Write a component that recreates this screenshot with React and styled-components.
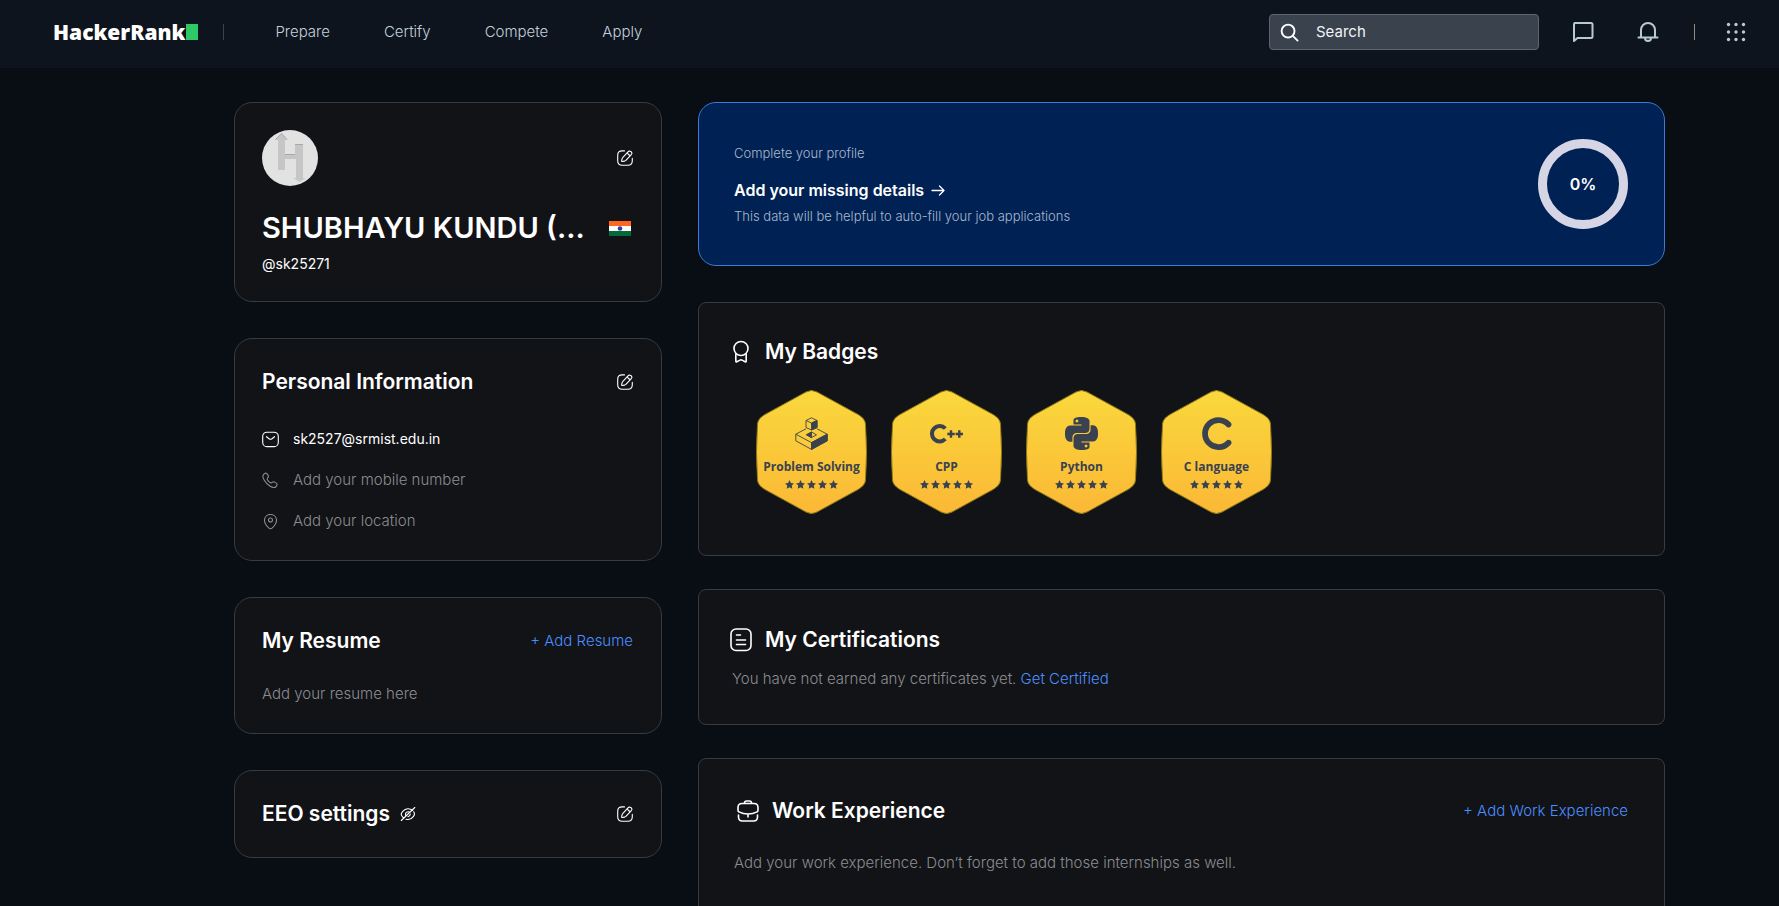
import React from "react";
import styled, { createGlobalStyle } from "styled-components";
import { SiPython } from "react-icons/si";

const GlobalStyle = createGlobalStyle`
  *, *::before, *::after { box-sizing: border-box; }
  body {
    margin: 0;
    background: #080e14;
    color: #ffffff;
    font-family: Inter, "Liberation Sans", sans-serif;
    font-size: 15px;
    line-height: 20px;
  }
  h1, h2, p, ul { margin: 0; padding: 0; }
  ul { list-style: none; }
  a { text-decoration: none; color: inherit; }
  button { border: 0; padding: 0; background: none; color: inherit; font: inherit; cursor: pointer; }
  svg { display: block; flex: none; }
`;

/* ---------- shell ---------- */

const Shell = styled.div`
  display: flex;
  flex-direction: column;
  height: 100vh;
`;

const Header = styled.header`
  display: flex;
  align-items: center;
  flex: none;
  height: 68px;
  padding: 0 33px 4px 53px;
  background: #0e141e;
`;

const Logo = styled.a`
  display: flex;
  align-items: center;
  gap: 1px;
  font-family: "Open Sans", "Noto Sans", sans-serif;
  font-size: 21px;
  font-weight: 800;
  line-height: 24px;
`;

const LogoCursor = styled.span`
  width: 12px;
  height: 16px;
  background: #2ec866;
`;

const Divider = styled.span`
  width: 1px;
  height: 16px;
  background: ${(p) => p.$color};
`;

const LogoGroup = styled.div`
  display: flex;
  align-items: center;
  gap: 25px;
`;

const Nav = styled.nav`
  display: flex;
  gap: 54px;
  margin-left: 51px;
  color: #c3d0da;
  font-weight: 300;
`;

const HeaderTools = styled.div`
  display: flex;
  align-items: center;
  margin-left: auto;
  color: #b7c9d3;
`;

const SearchBox = styled.label`
  display: flex;
  align-items: center;
  gap: 17px;
  width: 270px;
  height: 36px;
  margin-right: 32px;
  padding: 0 10px;
  border: 1px solid #5d666f;
  border-radius: 4px;
  background: #39424d;
  color: #ffffff;
`;

const SearchInput = styled.input`
  flex: 1;
  min-width: 0;
  border: 0;
  padding: 0;
  outline: 0;
  background: none;
  color: #ffffff;
  font: inherit;
  &::placeholder { color: #f1f4f6; opacity: 1; }
`;

const ToolGroup = styled.div`
  display: flex;
  align-items: center;
  gap: ${(p) => p.$gap}px;
`;

/* ---------- page ---------- */

const Main = styled.main`
  display: grid;
  grid-template-columns: minmax(0, 428px) minmax(0, 1fr);
  gap: 36px;
  align-items: start;
  flex: 1;
  min-height: 0;
  padding: 34px 114px 34px 234px;
  overflow-y: auto;
  scrollbar-width: none;
`;

const Column = styled.div`
  display: flex;
  flex-direction: column;
  gap: ${(p) => p.$gap}px;
`;

const Card = styled.section`
  border: 1px solid #383b3f;
  border-radius: 18px;
  padding: 27px 28px 27px 27px;
  background: #121317;
`;

const Row = styled.div`
  display: flex;
  align-items: center;
  justify-content: space-between;
`;

const Title = styled.h2`
  display: flex;
  align-items: center;
  gap: 10px;
  font-size: 21px;
  font-weight: 600;
  line-height: 32px;
`;

const Muted = styled.p`
  color: #8a8c90;
  font-weight: 300;
`;

const LinkText = styled.a`
  color: #4a8eff;
  font-weight: 300;
`;

/* ---------- left column ---------- */

const Avatar = styled.svg`
  width: 56px;
  height: 56px;
  border-radius: 50%;
`;

const Name = styled.h1`
  font-size: 29px;
  font-weight: 600;
  line-height: 40px;
  white-space: nowrap;
`;

const NameRow = styled(Row)`
  margin-top: 22px;
  padding-right: 2px;
`;

const Handle = styled.p`
  margin-top: 6px;
  font-size: 14px;
`;

const ContactList = styled.ul`
  display: flex;
  flex-direction: column;
  gap: 21px;
  margin: 31px 0 2px;
`;

const Contact = styled.li`
  display: flex;
  align-items: center;
  gap: 14px;
  color: ${(p) => (p.$filled ? "#ffffff" : "#8a8c90")};
  font-size: ${(p) => (p.$filled ? 14 : 15)}px;
  font-weight: ${(p) => (p.$filled ? 400 : 300)};
`;

const ResumeNote = styled(Muted)`
  margin: 27px 0 2px;
`;

/* ---------- right column ---------- */

const Banner = styled(Card)`
  display: flex;
  align-items: center;
  justify-content: space-between;
  padding: 36px 36px 36px 35px;
  border-color: #3b7ad9;
  background: #002153;
`;

const BannerText = styled.div`
  display: flex;
  flex-direction: column;
  font-size: 13px;
  font-weight: 300;
  color: #a9bace;
`;

const BannerLink = styled.a`
  display: flex;
  align-items: center;
  gap: 7px;
  margin: 15px 0 4px;
  color: #ffffff;
  font-size: 16px;
  font-weight: 600;
  line-height: 24px;
`;

const Progress = styled.div`
  display: grid;
  place-items: center;
  width: 90px;
  height: 90px;
  border: 9px solid #d5d5e5;
  border-radius: 50%;
  font-size: 16px;
  font-weight: 600;
`;

const Panel = styled(Card)`
  border-radius: 8px;
  padding: ${(p) => p.$padding};
`;

const PanelTitle = styled(Title)`
  gap: 12px;
`;

const BadgeList = styled.ul`
  display: flex;
  gap: 24px;
  margin-top: 22px;
  padding-left: 27px;
`;

const BadgeItem = styled.li`
  position: relative;
  display: flex;
  flex-direction: column;
  align-items: center;
  width: 111px;
  height: 124px;
  padding-top: 27px;
  color: #39424e;
`;

const BadgeShape = styled.svg`
  position: absolute;
  inset: 0;
`;

const BadgeContent = styled.div`
  position: relative;
  display: flex;
  flex-direction: column;
  align-items: center;
`;

const BadgeName = styled.span`
  margin-top: 8px;
  font-family: "Open Sans", "Noto Sans", sans-serif;
  font-size: 12px;
  font-weight: 700;
  line-height: 18px;
  white-space: nowrap;
`;

const Stars = styled.div`
  display: flex;
  gap: 2px;
  margin-top: 4px;
`;

const CertificateNote = styled(Muted)`
  padding-left: 3px;
`;

const WorkHeading = styled(Row)`
  padding-left: 2px;
`;

/* ---------- icons ---------- */

const Icon = ({ size = 16, box = 24, width = 1.5, children }) => (
  <svg width={size} height={size} viewBox={`0 0 ${box} ${box}`} fill="none" stroke="currentColor"
    strokeWidth={width} strokeLinecap="round" strokeLinejoin="round" aria-hidden="true">
    {children}
  </svg>
);

const EditIcon = () => (
  <Icon size={16} box={16} width={1.1}>
    <path d="M7.5 .9H5.2Q.7 .9 .7 5.2v5.5q0 4.5 4.5 4.5h5.6q4.5 0 4.5-4.5V8.4" />
    <path d="M11 1.8q1.2-1.3 2.7-.3 2 1.4.6 3.1L8.900 10.300q-.6.6-1.600.8l-1.900.4q-.9.1-.7-.8l.4-2q.2-.8.8-1.400z" />
    <path d="M10.300 2.700q.7 2.200 3 2.900" />
  </Icon>
);

const SearchIcon = () => (
  <Icon size={19} box={20} width={2}>
    <circle cx="8.500" cy="8.500" r="6.800" /><path d="M13.500 13.500l5 5" />
  </Icon>
);

const ChatIcon = () => (
  <Icon size={24} width={2}>
    <path d="M3.500 3h16.500q1.500 0 1.500 1.500v12q0 1.500-1.500 1.500H6.500L3 21V4.500q0-1.500 1.500-1.500" />
  </Icon>
);

const BellIcon = () => (
  <Icon size={24} width={2}>
    <path d="M5 17V10a7 7 0 0 1 14 0v7M2.500 17.500h19M9 18c0 4 6 4 6 0" />
  </Icon>
);

const GridIcon = () => (
  <svg width="20" height="20" viewBox="0 0 20 20" fill="currentColor" aria-hidden="true">
    {[2.500, 10, 17.500].map((y) => [2.500, 10, 17.500].map((x) => <circle key={`${x}-${y}`} cx={x} cy={y} r="1.700" />))}
  </svg>
);

const MailIcon = () => (
  <Icon size={17} box={17} width={1.1}>
    <rect x=".7" y="1.200" width="15.600" height="14.400" rx="4.200" />
    <path d="M4.500 5.700l2.500 2q1.500 1.100 3 0l2.500-2" />
  </Icon>
);

const PhoneIcon = () => (
  <Icon size={17} box={17} width={1.1}>
    <path d="M1.500 2.600Q4-.2 5.500 2.400q1.700 2.200.2 3.500-1.400 1.200.9 3.500t3.600 1q1.300-1.300 3.400.2 2.700 1.600.6 3.900-2.200 2.200-6-.2Q4.500 12 2.300 8.200 0 4.500 1.500 2.600z" />
  </Icon>
);

const PinIcon = () => (
  <Icon size={17} box={17} width={1.1}>
    <path d="M2.500 6.800C2.900-.3 14.100-.3 14.500 6.800c.2 3.300-2 6-4.200 8.100q-1.800 1.600-3.600 0C4.500 12.800 2.300 10.100 2.500 6.800z" />
    <circle cx="8.500" cy="7" r="2" />
  </Icon>
);

const EyeOffIcon = () => (
  <Icon size={16} box={16} width={1.1}>
    <path d="M12.600 4.500C9.800 1.900 5.500 2.300 3 5.200 1 7.500.6 8.300 2.300 10.500q.7.9 1.500 1.500M6 13.200c3 .9 5.500-.1 7.300-2.500 1.900-2.400 1.600-3.300.4-5M10.300 8.100q-.3 2.200-2.300 2.500M5.700 9.700C4.800 6.800 7 5.100 9.800 6M14.800 1.500L1.300 14.500" />
  </Icon>
);

const ArrowIcon = () => (
  <Icon size={14} box={14} width={1.3}><path d="M1 7.500h12M8.500 3L13 7.500 8.500 12" /></Icon>
);

const AwardIcon = () => (
  <Icon size={24} width={1.6}>
    <circle cx="12" cy="8.500" r="7" />
    <path d="M6.800 14v7q0 1.200 1 .7l3.200-1.600q1-.5 2 0l3.200 1.600q1 .5 1-.7v-7" />
  </Icon>
);

const CertificateIcon = () => (
  <Icon size={24} width={1.6}>
    <rect x="2" y="1" width="20" height="21.500" rx="5" />
    <path d="M7.500 7h4M7.500 12h9M7.500 16.500h9" />
  </Icon>
);

const BriefcaseIcon = () => (
  <Icon size={24} width={1.6}>
    <path d="M8.500 4.500V4q0-2 2-2h3q2 0 2 2v.5M2 8.500q0-4 4-4h12q4 0 4 4v3q0 1-1 1.400-4 2.100-9 2.100t-9-2.100Q2 12.500 2 11.500zM2.500 16v2q0 4 4 4h11q4 0 4-4v-2M12 15v3" />
  </Icon>
);

const IndiaFlag = () => (
  <svg width="22" height="15" viewBox="0 0 22 15" role="img" aria-label="India">
    <path fill="#ff671f" d="M0 0h22v5H0z" />
    <path fill="#fff" d="M0 5h22v5H0z" />
    <path fill="#046a38" d="M0 10h22v5H0z" />
    <circle cx="11" cy="7.500" r="2.300" fill="#3a37a8" />
  </svg>
);

const ProfilePicture = () => (
  <Avatar viewBox="0 0 56 56" role="img" aria-label="Profile picture">
    <rect width="56" height="56" fill="#e2e2e2" />
    <path fill="#c6c6c6" d="M16 40V10h-3l6.500-7 6 7h-2.500v14h10V14h8v34h2.500l-6 4-6.500-4h3V29H23v11z" />
    <path fill="none" stroke="#a9a9a9" d="M13.500 9.500l6-6 5.500 6M23 24.500h10M33 14.500h8" />
  </Avatar>
);

const StarIcon = () => (
  <svg width="9" height="9" viewBox="0 0 24 24" fill="currentColor" aria-hidden="true">
    <path d="M12 .3l3.700 7.500 8.300 1.200-6 5.800 1.500 8.400L12 19.300l-7.500 3.900L6 14.800 0 9l8.300-1.200z" />
  </svg>
);

const ProblemSolvingIcon = () => (
  <svg width="33" height="33" viewBox="0 0 33 33" fill="none" stroke="currentColor" strokeWidth=".9" strokeLinejoin="round">
    <path d="M11 11.800L.8 17.200v6.600l15.700 8.600 15.700-8.600v-6.600L22 11.800M.8 17.200l15.700 8.400 15.700-8.400M16.500 25.600v6.800" />
    <path fill="currentColor" d="M16.500 25.600l15.700-8.400v6.600l-15.700 8.600z" />
    <path d="M16.500.8l5.500 2.700v7L16.500 13 11 10.500v-7zM11 3.500l5.500 2.600L22 3.500" />
    <path fill="currentColor" d="M16.500 6.100L22 3.500v7L16.500 13z" />
    <path d="M16.500 15l5 2.800-5 2.800-5-2.800z" />
    <path fill="currentColor" d="M16.500 15v5.600l-5-2.800z" />
  </svg>
);

const CppIcon = () => (
  <svg width="33" height="33" viewBox="0 0 33 33" fill="none" stroke="currentColor">
    <path strokeWidth="4" d="M15.300 11.500a7.700 7.700 0 1 0 0 10.500" />
    <path strokeWidth="2.400" d="M17.300 17h7.400M21 13.300v7.400M25.600 17h7.400M29.300 13.300v7.400" />
  </svg>
);

const CIcon = () => (
  <svg width="33" height="33" viewBox="0 0 33 33" fill="none" stroke="currentColor" strokeWidth="5.800" strokeLinecap="round">
    <path d="M28.500 7.500a13.500 13.500 0 1 0 0 18.200" />
  </svg>
);

/* ---------- composition ---------- */

const badges = [
  { name: "Problem Solving", icon: <ProblemSolvingIcon /> },
  { name: "CPP", icon: <CppIcon /> },
  { name: "Python", icon: <SiPython size={33} /> },
  { name: "C language", icon: <CIcon /> },
];

const Badge = ({ name, icon, id }) => (
  <BadgeItem>
    <BadgeShape width="111" height="124" viewBox="0 0 111 124" aria-hidden="true">
      <defs>
        <linearGradient id={id} x1="0" y1="0" x2="0" y2="1">
          <stop offset="0" stopColor="#fad83c" />
          <stop offset="1" stopColor="#fbb836" />
        </linearGradient>
      </defs>
      <path fill={`url(#${id})`} stroke="#8f7a14"
        d="M50 2Q55.500 -1 61 2L102 24.500Q109 28.500 109.500 34Q111.500 62 109.500 90Q109 95.500 102 99.500L61 122Q55.500 125 50 122L9 99.500Q2 95.500 1.500 90Q-.5 62 1.500 34Q2 28.500 9 24.500Z" />
    </BadgeShape>
    <BadgeContent>
      {icon}
      <BadgeName>{name}</BadgeName>
      <Stars role="img" aria-label="5 stars">
        {[1, 2, 3, 4, 5].map((n) => <StarIcon key={n} />)}
      </Stars>
    </BadgeContent>
  </BadgeItem>
);

const EditButton = ({ label }) => <button type="button" aria-label={label}><EditIcon /></button>;

export default function App() {
  return (
    <Shell>
      <GlobalStyle />
      <Header>
        <LogoGroup>
          <Logo href="#home">HackerRank<LogoCursor /></Logo>
          <Divider $color="#34434f" />
        </LogoGroup>
        <Nav>
          <a href="#prepare">Prepare</a>
          <a href="#certify">Certify</a>
          <a href="#compete">Compete</a>
          <a href="#apply">Apply</a>
        </Nav>
        <HeaderTools>
          <SearchBox>
            <SearchIcon />
            <SearchInput type="search" placeholder="Search" aria-label="Search" />
          </SearchBox>
          <ToolGroup $gap={34}>
            <ToolGroup $gap={41}>
              <button type="button" aria-label="Messages"><ChatIcon /></button>
              <button type="button" aria-label="Notifications"><BellIcon /></button>
            </ToolGroup>
            <ToolGroup $gap={31}>
              <Divider $color="#8b8d80" />
              <button type="button" aria-label="Products"><GridIcon /></button>
            </ToolGroup>
          </ToolGroup>
        </HeaderTools>
      </Header>

      <Main>
        <Column $gap={36}>
          <Card>
            <Row>
              <ProfilePicture />
              <EditButton label="Edit profile" />
            </Row>
            <NameRow>
              <Name>SHUBHAYU KUNDU (...</Name>
              <IndiaFlag />
            </NameRow>
            <Handle>@sk25271</Handle>
          </Card>

          <Card>
            <Row>
              <Title>Personal Information</Title>
              <EditButton label="Edit personal information" />
            </Row>
            <ContactList>
              <Contact $filled><MailIcon />sk2527@srmist.edu.in</Contact>
              <Contact><PhoneIcon />Add your mobile number</Contact>
              <Contact><PinIcon />Add your location</Contact>
            </ContactList>
          </Card>

          <Card>
            <Row>
              <Title>My Resume</Title>
              <LinkText href="#resume">+ Add Resume</LinkText>
            </Row>
            <ResumeNote>Add your resume here</ResumeNote>
          </Card>

          <Card>
            <Row>
              <Title>EEO settings<EyeOffIcon /></Title>
              <EditButton label="Edit EEO settings" />
            </Row>
          </Card>
        </Column>

        <Column $gap={36}>
          <Banner>
            <BannerText>
              <p>Complete your profile</p>
              <BannerLink href="#details">Add your missing details<ArrowIcon /></BannerLink>
              <p>This data will be helpful to auto-fill your job applications</p>
            </BannerText>
            <Progress>0%</Progress>
          </Banner>

          <Column $gap={33}>
            <Panel $padding="33px 30px 41px">
              <PanelTitle><AwardIcon />My Badges</PanelTitle>
              <BadgeList>
                {badges.map((b, i) => <Badge key={b.name} id={`gold-${i}`} {...b} />)}
              </BadgeList>
            </Panel>

            <Panel $padding="34px 30px 35px">
              <Column $gap={13}>
                <PanelTitle><CertificateIcon />My Certifications</PanelTitle>
                <CertificateNote>You have not earned any certificates yet. <LinkText href="#certify">Get Certified</LinkText></CertificateNote>
              </Column>
            </Panel>

            <Panel $padding="36px 36px 64px 35px">
              <Column $gap={26}>
                <WorkHeading>
                  <PanelTitle><BriefcaseIcon />Work Experience</PanelTitle>
                  <LinkText href="#work">+ Add Work Experience</LinkText>
                </WorkHeading>
                <Muted>Add your work experience. Don’t forget to add those internships as well.</Muted>
              </Column>
            </Panel>
          </Column>
        </Column>
      </Main>
    </Shell>
  );
}
